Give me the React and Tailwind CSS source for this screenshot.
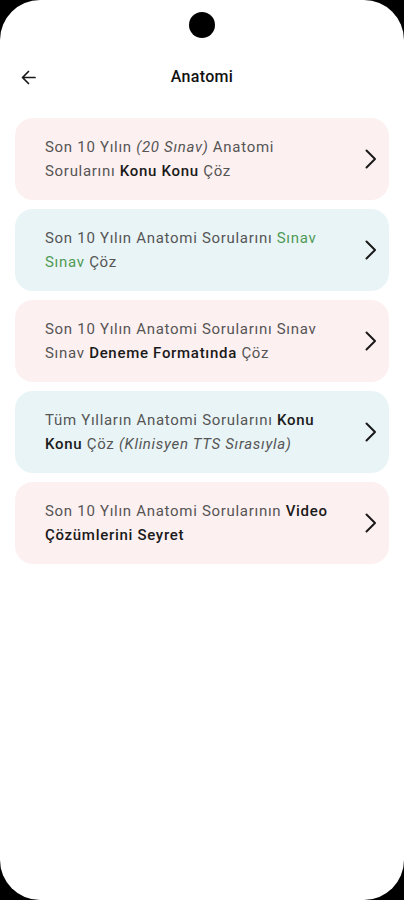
import React from "react";

const items = [
  {
    bg: "bg-[#fdf0f0]",
    parts: [
      ["Son 10 Yılın "],
      ["(20 Sınav)", "i"],
      [" Anatomi Sorularını "],
      ["Konu Konu", "b"],
      [" Çöz"],
    ],
  },
  {
    bg: "bg-[#e9f4f6]",
    parts: [["Son 10 Yılın Anatomi Sorularını "], ["Sınav Sınav", "g"], [" Çöz"]],
  },
  {
    bg: "bg-[#fdf0f0]",
    parts: [
      ["Son 10 Yılın Anatomi Sorularını Sınav Sınav "],
      ["Deneme Formatında", "b"],
      [" Çöz"],
    ],
  },
  {
    bg: "bg-[#e9f4f6]",
    parts: [
      ["Tüm Yılların Anatomi Sorularını "],
      ["Konu Konu", "b"],
      [" Çöz "],
      ["(Klinisyen TTS Sırasıyla)", "i"],
    ],
  },
  {
    bg: "bg-[#fdf0f0]",
    parts: [["Son 10 Yılın Anatomi Sorularının "], ["Video Çözümlerini Seyret", "b"]],
  },
];

const partClass = (kind) => {
  if (kind === "b") return "font-medium text-[#1a1a1a]";
  if (kind === "i") return "italic";
  if (kind === "g") return "text-[#4f9a55]";
  return "";
};

const Chevron = () => (
  <svg width="12" height="20" viewBox="0 0 12 20" fill="none">
    <path d="M1.5 1.5 L10 10 L1.5 18.5" stroke="#1a1a1a" strokeWidth="2" strokeLinecap="round" strokeLinejoin="round" />
  </svg>
);

export default function App() {
  return (
    <div className="w-[404px] h-[900px] bg-black" style={{ fontFamily: "Roboto, 'Noto Sans', sans-serif" }}>
      <div className="relative w-full h-full bg-white rounded-[40px] overflow-hidden">
        {/* camera hole */}
        <div className="absolute left-[189px] top-[12px] w-[26px] h-[26px] rounded-full bg-black" />

        {/* header */}
        <div className="flex items-center h-[30px] mt-[62px] px-[21px] relative">
          <svg width="15" height="15" viewBox="0 0 15 15" fill="none">
            <path d="M14 7.5 H1.5 M7.5 1.5 L1.5 7.5 L7.5 13.5" stroke="#1a1a1a" strokeWidth="1.7" strokeLinecap="round" strokeLinejoin="round" />
          </svg>
          <div className="absolute inset-x-0 text-center text-[16px] tracking-[0.3px] font-medium text-[#111]">Anatomi</div>
        </div>

        {/* list */}
        <div className="flex flex-col gap-[9px] px-[15px] mt-[26px]">
          {items.map((item, i) => (
            <div key={i} className={`${item.bg} rounded-[18px] h-[82px] flex items-center pl-[30px] pr-[12px]`}>
              <p className="w-[292px] text-[15px] tracking-[0.7px] leading-[24px] text-[#555]">
                {item.parts.map(([t, k], j) => (
                  <span key={j} className={partClass(k)}>{t}</span>
                ))}
              </p>
              <div className="ml-auto flex items-center">
                <Chevron />
              </div>
            </div>
          ))}
        </div>
      </div>
    </div>
  );
}
